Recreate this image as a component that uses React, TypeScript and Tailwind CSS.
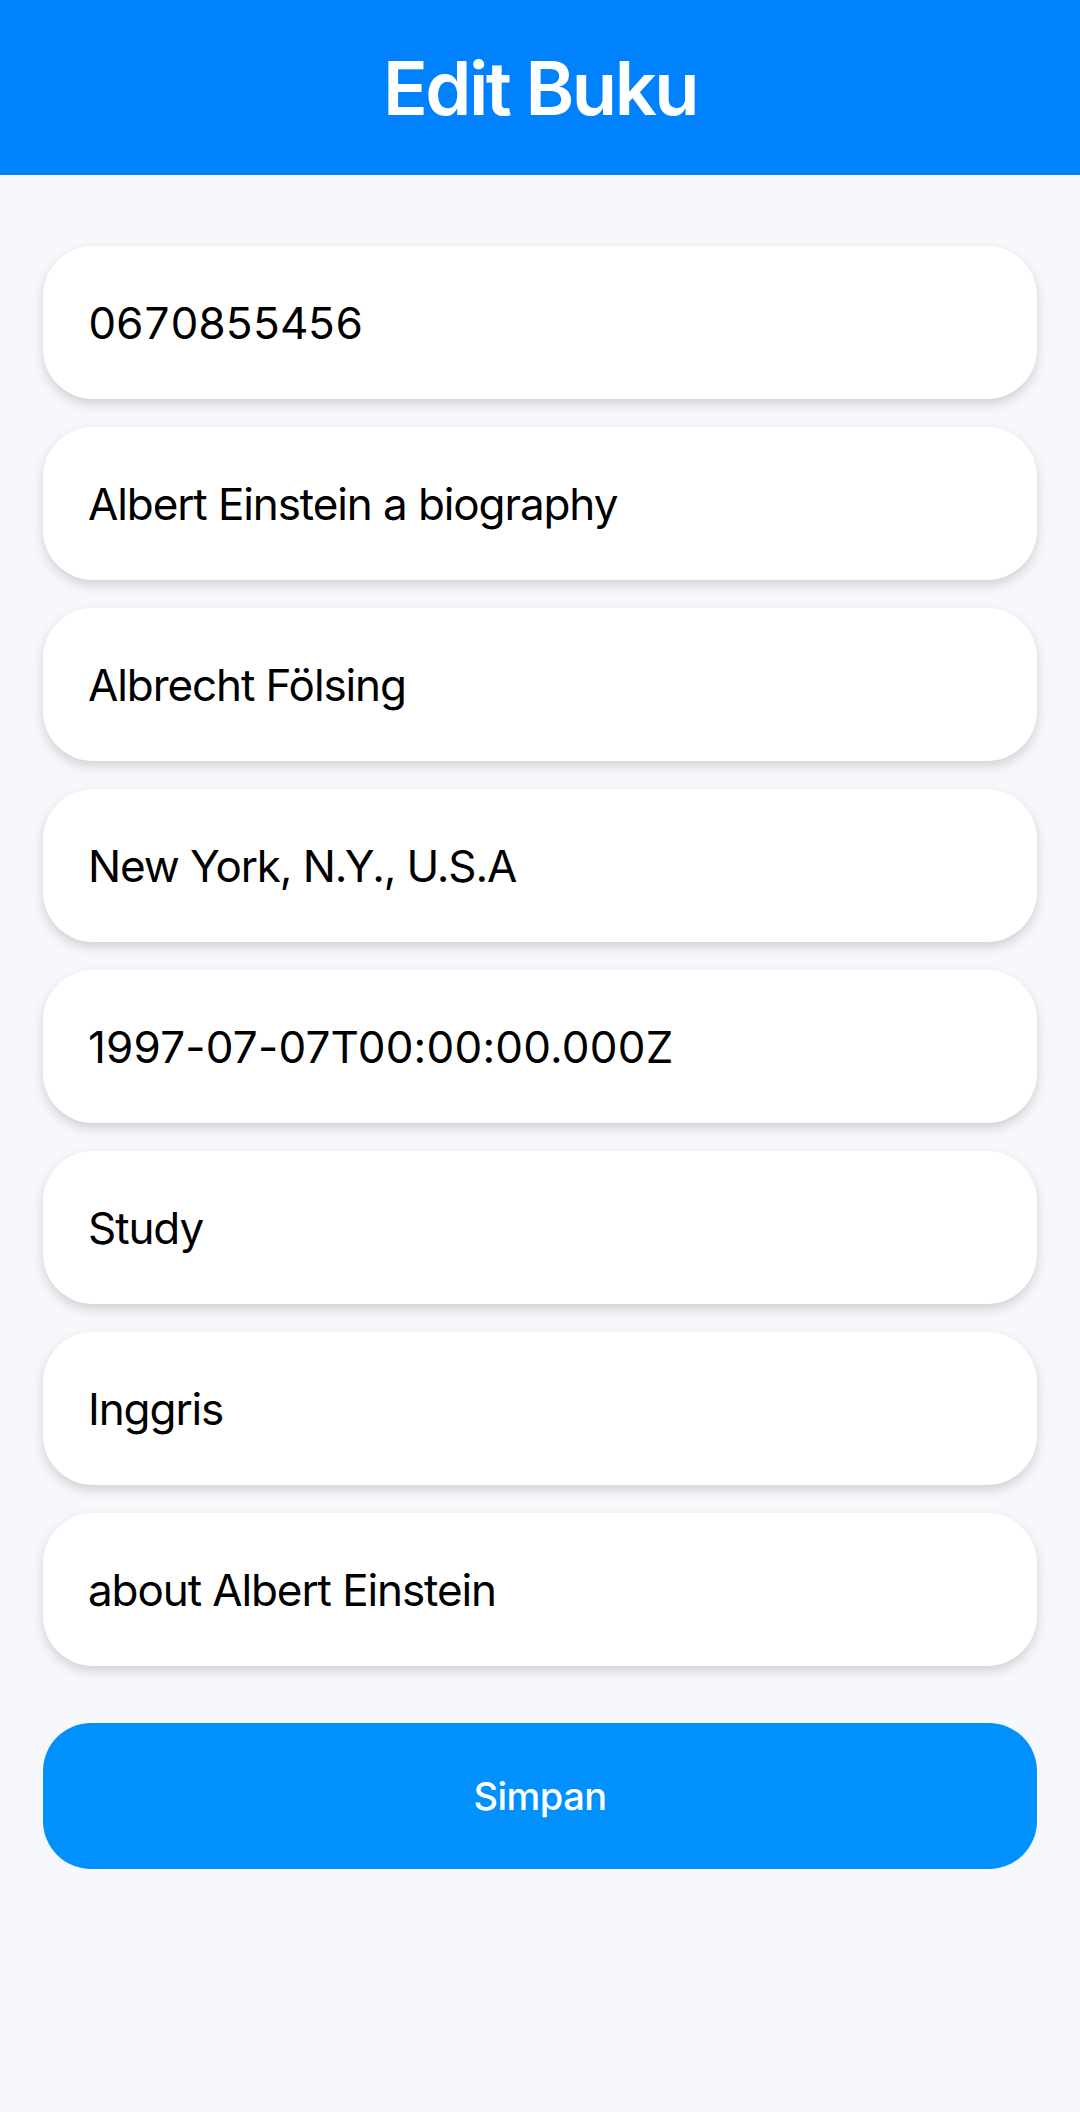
import React from "react";

const fields: { text: string; cls: string }[] = [
  { text: "0670855456", cls: "tracking-[-1.1px] tabular-nums" },
  { text: "Albert Einstein a biography", cls: "tracking-[-1.1px]" },
  { text: "Albrecht Fölsing", cls: "tracking-[-1.1px]" },
  { text: "New York, N.Y., U.S.A", cls: "tracking-[-1.1px]" },
  { text: "1997-07-07T00:00:00.000Z", cls: "tracking-[0.2px]" },
  { text: "Study", cls: "tracking-[-1.1px]" },
  { text: "Inggris", cls: "tracking-[-1.1px]" },
  { text: "about Albert Einstein", cls: "tracking-[-1.1px]" },
];

function Field({ text, cls }: { text: string; cls: string }) {
  return (
    <div className="flex h-[153px] items-center rounded-[50px] bg-white pl-[45px] shadow-[0_5px_12px_rgba(0,0,0,0.16)]">
      <span className={`text-[44px] leading-none text-black ${cls}`}>{text}</span>
    </div>
  );
}

export default function App() {
  return (
    <div className="min-h-[2112px] w-[1080px] bg-[#F7F8FC] font-['Inter',sans-serif]">
      <header className="flex h-[175px] items-center justify-center bg-[#0082FF]">
        <h1 className="text-[74px] font-semibold leading-none tracking-[-2.5px] text-white">Edit Buku</h1>
      </header>
      <main className="flex flex-col px-[43px] pt-[71px]">
        <div className="flex flex-col gap-[28px]">
          {fields.map((f) => (
            <Field key={f.text} text={f.text} cls={f.cls} />
          ))}
        </div>
        <button className="mt-[57px] flex h-[146px] items-center justify-center rounded-[48px] bg-[#0091FF]">
          <span className="text-[38px] font-medium leading-none tracking-[-0.5px] text-white">Simpan</span>
        </button>
      </main>
    </div>
  );
}
